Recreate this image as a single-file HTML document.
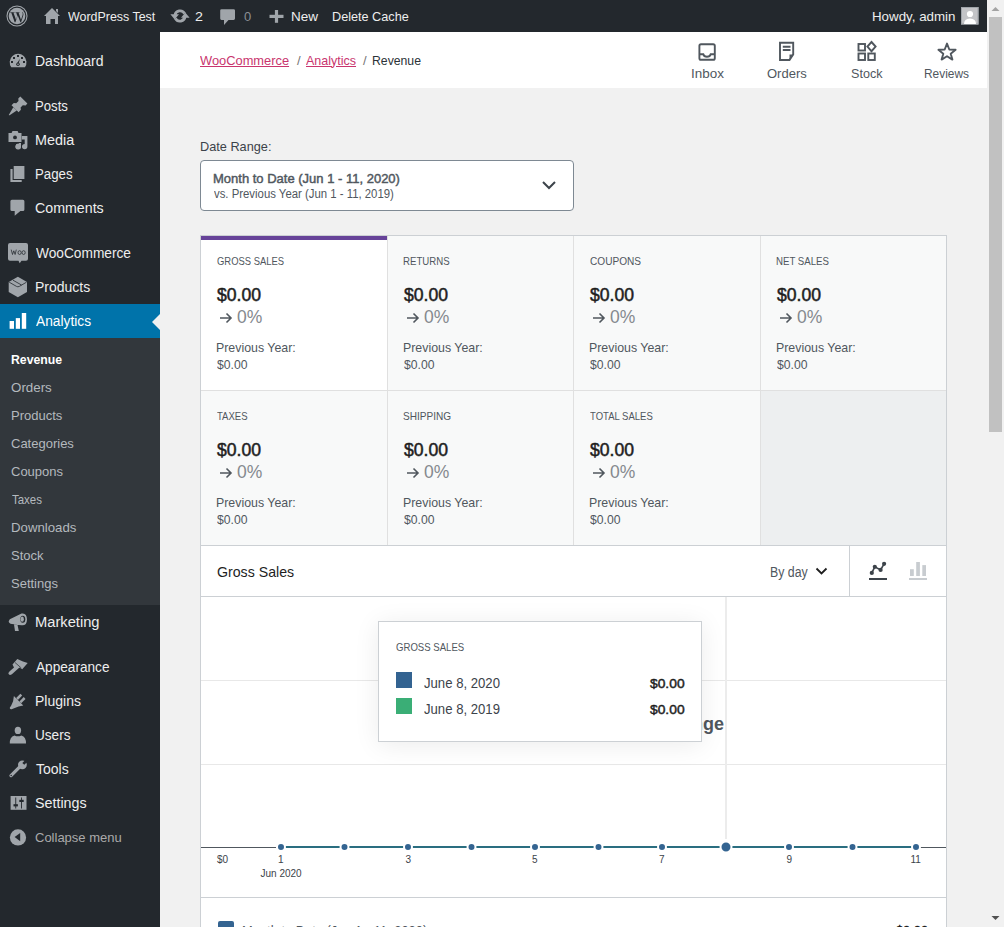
<!DOCTYPE html>
<html><head><meta charset="utf-8">
<style>
*{box-sizing:border-box;margin:0;padding:0}
html,body{width:1004px;height:927px;overflow:hidden;background:#f1f1f1;font-family:"Liberation Sans",sans-serif;position:relative}
.a{position:absolute}
.t{position:absolute;white-space:nowrap;font-family:"Liberation Sans",sans-serif}
svg{position:absolute;overflow:visible}
</style></head><body>
<!-- admin bar -->
<div class="a" style="left:0;top:0;width:987px;height:32px;background:#23282d"></div>
<!-- sidebar -->
<div class="a" style="left:0;top:32px;width:160px;height:895px;background:#23282d"></div>
<div class="a" style="left:0;top:338px;width:160px;height:267px;background:#32373c"></div>
<div class="a" style="left:0;top:304px;width:160px;height:34px;background:#0073aa"></div>
<svg style="left:152px;top:314px" width="8" height="16"><path d="M8 0 L0 8 L8 16Z" fill="#f1f1f1"/></svg>
<!-- header -->
<div class="a" style="left:160px;top:32px;width:827px;height:56px;background:#fff"></div>
<!-- scrollbar -->
<div class="a" style="left:987px;top:0;width:17px;height:927px;background:#f1f1f1"></div>
<div class="a" style="left:989px;top:17px;width:13px;height:415px;background:#c1c1c1"></div>
<svg style="left:987px;top:0" width="17" height="17"><path d="M4.5 11 L8.5 7 L12.5 11Z" fill="#a3a3a3"/></svg>
<svg style="left:987px;top:910px" width="17" height="17"><path d="M4.5 6 L8.5 10 L12.5 6Z" fill="#505050"/></svg>

<!-- date range box -->
<div class="a" style="left:200px;top:160px;width:374px;height:51px;background:#fff;border:1px solid #7e8993;border-radius:4px"></div>
<svg style="left:541px;top:180px" width="16" height="10"><path d="M2 2 L8 8 L14 2" fill="none" stroke="#3c434a" stroke-width="2"/></svg>

<!-- summary grid -->
<div class="a" style="left:200px;top:235px;width:747px;height:311px;background:#e0e0e0;border:1px solid #ccd0d4"></div>
<div class="a" style="left:201px;top:236px;width:186px;height:154px;background:#fff"></div>
<div class="a" style="left:201px;top:236px;width:186px;height:4px;background:#674399"></div>
<div class="a" style="left:388px;top:236px;width:185px;height:154px;background:#f8f9f9"></div>
<div class="a" style="left:574px;top:236px;width:186px;height:154px;background:#f8f9f9"></div>
<div class="a" style="left:761px;top:236px;width:185px;height:154px;background:#f8f9f9"></div>
<div class="a" style="left:201px;top:391px;width:186px;height:154px;background:#f8f9f9"></div>
<div class="a" style="left:388px;top:391px;width:185px;height:154px;background:#f8f9f9"></div>
<div class="a" style="left:574px;top:391px;width:186px;height:154px;background:#f8f9f9"></div>
<div class="a" style="left:761px;top:391px;width:185px;height:154px;background:#edeff0"></div>
<!-- arrows in summary -->
<svg style="left:0;top:0" width="1" height="1">
<defs><g id="arr"><path d="M0 5 H11 M6.5 0.5 L11 5 L6.5 9.5" fill="none" stroke="#50575e" stroke-width="1.6"/></g></defs>
<use href="#arr" x="220" y="313"/><use href="#arr" x="407" y="313"/><use href="#arr" x="593" y="313"/><use href="#arr" x="780" y="313"/>
<use href="#arr" x="220" y="468"/><use href="#arr" x="407" y="468"/><use href="#arr" x="593" y="468"/>
</svg>

<!-- chart panel -->
<div class="a" style="left:200px;top:545px;width:747px;height:400px;background:#fff;border:1px solid #ccd0d4"></div>
<div class="a" style="left:201px;top:596px;width:745px;height:1px;background:#ccd0d4"></div>
<div class="a" style="left:849px;top:546px;width:1px;height:50px;background:#ccd0d4"></div>
<div class="a" style="left:201px;top:897px;width:745px;height:1px;background:#ccd0d4"></div>
<div class="a" style="left:201px;top:680px;width:745px;height:1px;background:#e8e8e8"></div>
<div class="a" style="left:201px;top:764px;width:745px;height:1px;background:#e8e8e8"></div>
<div class="a" style="left:725px;top:597px;width:2px;height:242px;background:#ececec"></div>
<!-- by day chevron -->
<svg style="left:815px;top:567px" width="13" height="9"><path d="M1.5 1.5 L6.5 6.5 L11.5 1.5" fill="none" stroke="#1e1e1e" stroke-width="1.8"/></svg>
<!-- line chart icon -->
<svg style="left:0;top:0" width="1004" height="927">
<path d="M871.8 572.9 L874.8 566.8 L880.6 569.9 L884.1 563.8" fill="none" stroke="#3c434a" stroke-width="1.6"/>
<g fill="#3c434a"><circle cx="871.8" cy="572.9" r="2.1"/><circle cx="874.8" cy="566.8" r="2.1"/><circle cx="880.6" cy="569.9" r="2.1"/><circle cx="884.1" cy="563.8" r="2.1"/>
<rect x="869" y="578" width="18" height="2"/></g>
<g fill="#c8ccd0"><rect x="910" y="569.2" width="3.8" height="6.8"/><rect x="916.2" y="562" width="3.7" height="14"/><rect x="922.3" y="565.1" width="3.7" height="10.9"/><rect x="909" y="578" width="18" height="2"/></g>
</svg>
<!-- chart axis & line -->
<svg style="left:0;top:0" width="1004" height="927">
<line x1="201" y1="847.5" x2="276" y2="847.5" stroke="#50575e" stroke-width="1"/>
<line x1="916" y1="847.5" x2="946" y2="847.5" stroke="#50575e" stroke-width="1"/>
<line x1="281" y1="847" x2="916" y2="847" stroke="#2a6e80" stroke-width="2"/>
<g fill="#346491" stroke="#fff" stroke-width="2">
<circle cx="281" cy="847" r="4"/><circle cx="344.5" cy="847" r="4"/><circle cx="408" cy="847" r="4"/><circle cx="471.5" cy="847" r="4"/>
<circle cx="535" cy="847" r="4"/><circle cx="598.5" cy="847" r="4"/><circle cx="662" cy="847" r="4"/><circle cx="726" cy="847" r="5.5"/>
<circle cx="789" cy="847" r="4"/><circle cx="852.5" cy="847" r="4"/><circle cx="916" cy="847" r="4"/>
</g>
</svg>
<!-- legend bottom checkbox -->
<div class="a" style="left:218px;top:921px;width:16px;height:16px;background:#346491;border-radius:2px"></div>

<div class="t" style="left:68.00px;top:10.00px;font-size:13.000px;line-height:13.000px;font-weight:400;color:#eeeeee;transform-origin:0 0;transform:scaleX(0.9560);">WordPress Test</div><div class="t" style="left:194.90px;top:10.00px;font-size:13.000px;line-height:13.000px;font-weight:400;color:#eeeeee;transform-origin:0 0;transform:scaleX(1.1000);">2</div><div class="t" style="left:244.00px;top:10.00px;font-size:13.000px;line-height:13.000px;font-weight:400;color:#8c8f94;transform-origin:0 0;transform:scaleX(1.0000);">0</div><div class="t" style="left:290.96px;top:10.00px;font-size:13.000px;line-height:13.000px;font-weight:400;color:#eeeeee;transform-origin:0 0;transform:scaleX(1.0400);">New</div><div class="t" style="left:332.03px;top:10.00px;font-size:13.000px;line-height:13.000px;font-weight:400;color:#eeeeee;transform-origin:0 0;transform:scaleX(0.9740);">Delete Cache</div><div class="t" style="left:871.98px;top:10.00px;font-size:13.000px;line-height:13.000px;font-weight:400;color:#eeeeee;transform-origin:0 0;transform:scaleX(1.0250);">Howdy, admin</div><div class="t" style="left:35.00px;top:54.15px;font-size:14.000px;line-height:14.000px;font-weight:400;color:#eeeeee;transform-origin:0 0;transform:scaleX(1.0000);">Dashboard</div><div class="t" style="left:35.06px;top:99.15px;font-size:14.000px;line-height:14.000px;font-weight:400;color:#eeeeee;transform-origin:0 0;transform:scaleX(0.9412);">Posts</div><div class="t" style="left:34.97px;top:133.15px;font-size:14.000px;line-height:14.000px;font-weight:400;color:#eeeeee;transform-origin:0 0;transform:scaleX(1.0270);">Media</div><div class="t" style="left:35.05px;top:167.15px;font-size:14.000px;line-height:14.000px;font-weight:400;color:#eeeeee;transform-origin:0 0;transform:scaleX(0.9474);">Pages</div><div class="t" style="left:34.98px;top:201.15px;font-size:14.000px;line-height:14.000px;font-weight:400;color:#eeeeee;transform-origin:0 0;transform:scaleX(1.0152);">Comments</div><div class="t" style="left:36.00px;top:246.15px;font-size:14.000px;line-height:14.000px;font-weight:400;color:#eeeeee;transform-origin:0 0;transform:scaleX(0.9794);">WooCommerce</div><div class="t" style="left:35.00px;top:280.15px;font-size:14.000px;line-height:14.000px;font-weight:400;color:#eeeeee;transform-origin:0 0;transform:scaleX(1.0000);">Products</div><div class="t" style="left:36.00px;top:314.15px;font-size:14.000px;line-height:14.000px;font-weight:400;color:#ffffff;transform-origin:0 0;transform:scaleX(0.9821);">Analytics</div><div class="t" style="left:34.95px;top:615.15px;font-size:14.000px;line-height:14.000px;font-weight:400;color:#eeeeee;transform-origin:0 0;transform:scaleX(1.0500);">Marketing</div><div class="t" style="left:36.00px;top:660.15px;font-size:14.000px;line-height:14.000px;font-weight:400;color:#eeeeee;transform-origin:0 0;transform:scaleX(0.9733);">Appearance</div><div class="t" style="left:35.00px;top:694.15px;font-size:14.000px;line-height:14.000px;font-weight:400;color:#eeeeee;transform-origin:0 0;transform:scaleX(1.0000);">Plugins</div><div class="t" style="left:35.03px;top:728.15px;font-size:14.000px;line-height:14.000px;font-weight:400;color:#eeeeee;transform-origin:0 0;transform:scaleX(0.9714);">Users</div><div class="t" style="left:36.00px;top:762.15px;font-size:14.000px;line-height:14.000px;font-weight:400;color:#eeeeee;transform-origin:0 0;transform:scaleX(1.0000);">Tools</div><div class="t" style="left:34.98px;top:796.15px;font-size:14.000px;line-height:14.000px;font-weight:400;color:#eeeeee;transform-origin:0 0;transform:scaleX(1.0204);">Settings</div><div class="t" style="left:35.00px;top:831.00px;font-size:13.000px;line-height:13.000px;font-weight:400;color:#aaaaaa;transform-origin:0 0;transform:scaleX(1.0000);">Collapse menu</div><div class="t" style="left:11.06px;top:353.00px;font-size:13.000px;line-height:13.000px;font-weight:700;color:#ffffff;transform-origin:0 0;transform:scaleX(0.9434);">Revenue</div><div class="t" style="left:10.97px;top:381.00px;font-size:13.000px;line-height:13.000px;font-weight:400;color:#b4b9be;transform-origin:0 0;transform:scaleX(1.0263);">Orders</div><div class="t" style="left:11.00px;top:409.00px;font-size:13.000px;line-height:13.000px;font-weight:400;color:#b4b9be;transform-origin:0 0;transform:scaleX(1.0000);">Products</div><div class="t" style="left:11.00px;top:437.00px;font-size:13.000px;line-height:13.000px;font-weight:400;color:#b4b9be;transform-origin:0 0;transform:scaleX(1.0000);">Categories</div><div class="t" style="left:11.00px;top:465.00px;font-size:13.000px;line-height:13.000px;font-weight:400;color:#b4b9be;transform-origin:0 0;transform:scaleX(1.0000);">Coupons</div><div class="t" style="left:12.00px;top:493.00px;font-size:13.000px;line-height:13.000px;font-weight:400;color:#b4b9be;transform-origin:0 0;transform:scaleX(0.8824);">Taxes</div><div class="t" style="left:10.98px;top:521.00px;font-size:13.000px;line-height:13.000px;font-weight:400;color:#b4b9be;transform-origin:0 0;transform:scaleX(1.0159);">Downloads</div><div class="t" style="left:11.00px;top:549.00px;font-size:13.000px;line-height:13.000px;font-weight:400;color:#b4b9be;transform-origin:0 0;transform:scaleX(1.0000);">Stock</div><div class="t" style="left:11.00px;top:577.00px;font-size:13.000px;line-height:13.000px;font-weight:400;color:#b4b9be;transform-origin:0 0;transform:scaleX(1.0000);">Settings</div><div class="t" style="left:200.00px;top:53.50px;font-size:13.000px;line-height:13.000px;font-weight:400;color:#c9356e;transform-origin:0 0;transform:scaleX(0.9889);text-decoration:underline;">WooCommerce</div><div class="t" style="left:297.00px;top:53.50px;font-size:13.000px;line-height:13.000px;font-weight:400;color:#757575;transform-origin:0 0;transform:scaleX(1.0000);">/</div><div class="t" style="left:306.00px;top:53.50px;font-size:13.000px;line-height:13.000px;font-weight:400;color:#c9356e;transform-origin:0 0;transform:scaleX(0.9615);text-decoration:underline;">Analytics</div><div class="t" style="left:363.00px;top:53.50px;font-size:13.000px;line-height:13.000px;font-weight:400;color:#757575;transform-origin:0 0;transform:scaleX(1.0000);">/</div><div class="t" style="left:372.06px;top:53.50px;font-size:13.000px;line-height:13.000px;font-weight:400;color:#2c3338;transform-origin:0 0;transform:scaleX(0.9412);">Revenue</div><div class="t" style="left:690.97px;top:67.00px;font-size:13.000px;line-height:13.000px;font-weight:400;color:#50575e;transform-origin:0 0;transform:scaleX(1.0333);">Inbox</div><div class="t" style="left:767.00px;top:67.00px;font-size:13.000px;line-height:13.000px;font-weight:400;color:#50575e;transform-origin:0 0;transform:scaleX(1.0000);">Orders</div><div class="t" style="left:851.03px;top:67.00px;font-size:13.000px;line-height:13.000px;font-weight:400;color:#50575e;transform-origin:0 0;transform:scaleX(0.9677);">Stock</div><div class="t" style="left:924.08px;top:67.00px;font-size:13.000px;line-height:13.000px;font-weight:400;color:#50575e;transform-origin:0 0;transform:scaleX(0.9167);">Reviews</div><div class="t" style="left:199.52px;top:140.00px;font-size:13.000px;line-height:13.000px;font-weight:400;color:#3c434a;transform-origin:0 0;transform:scaleX(0.9789);">Date Range:</div><div class="t" style="left:213.00px;top:172.00px;font-size:13.000px;line-height:13.000px;font-weight:400;color:#50575e;transform-origin:0 0;transform:scaleX(1.0000);-webkit-text-stroke:0.45px #50575e;">Month to Date (Jun 1 - 11, 2020)</div><div class="t" style="left:214.00px;top:187.84px;font-size:12.000px;line-height:12.000px;font-weight:400;color:#50575e;transform-origin:0 0;transform:scaleX(0.9471);">vs. Previous Year (Jun 1 - 11, 2019)</div><div class="t" style="left:217.00px;top:256.11px;font-size:10.500px;line-height:10.500px;font-weight:400;color:#50575e;transform-origin:0 0;transform:scaleX(0.8986);">GROSS SALES</div><div class="t" style="left:217.00px;top:286.06px;font-size:18.000px;line-height:18.000px;font-weight:400;color:#1e1e1e;transform-origin:0 0;transform:scaleX(0.9778);-webkit-text-stroke:0.5px #1e1e1e;">$0.00</div><div class="t" style="left:237.00px;top:309.19px;font-size:17.500px;line-height:17.500px;font-weight:400;color:#85898e;transform-origin:0 0;transform:scaleX(1.0000);">0%</div><div class="t" style="left:216.05px;top:340.50px;font-size:13.000px;line-height:13.000px;font-weight:400;color:#50575e;transform-origin:0 0;transform:scaleX(0.9512);">Previous Year:</div><div class="t" style="left:217.00px;top:358.40px;font-size:13.000px;line-height:13.000px;font-weight:400;color:#50575e;transform-origin:0 0;transform:scaleX(0.9375);">$0.00</div><div class="t" style="left:403.08px;top:256.11px;font-size:10.500px;line-height:10.500px;font-weight:400;color:#50575e;transform-origin:0 0;transform:scaleX(0.9184);">RETURNS</div><div class="t" style="left:404.00px;top:286.06px;font-size:18.000px;line-height:18.000px;font-weight:400;color:#1e1e1e;transform-origin:0 0;transform:scaleX(0.9778);-webkit-text-stroke:0.5px #1e1e1e;">$0.00</div><div class="t" style="left:424.00px;top:309.19px;font-size:17.500px;line-height:17.500px;font-weight:400;color:#85898e;transform-origin:0 0;transform:scaleX(1.0000);">0%</div><div class="t" style="left:403.05px;top:340.50px;font-size:13.000px;line-height:13.000px;font-weight:400;color:#50575e;transform-origin:0 0;transform:scaleX(0.9512);">Previous Year:</div><div class="t" style="left:404.00px;top:358.40px;font-size:13.000px;line-height:13.000px;font-weight:400;color:#50575e;transform-origin:0 0;transform:scaleX(0.9375);">$0.00</div><div class="t" style="left:590.00px;top:256.11px;font-size:10.500px;line-height:10.500px;font-weight:400;color:#50575e;transform-origin:0 0;transform:scaleX(0.9623);">COUPONS</div><div class="t" style="left:590.00px;top:286.06px;font-size:18.000px;line-height:18.000px;font-weight:400;color:#1e1e1e;transform-origin:0 0;transform:scaleX(0.9778);-webkit-text-stroke:0.5px #1e1e1e;">$0.00</div><div class="t" style="left:610.00px;top:309.19px;font-size:17.500px;line-height:17.500px;font-weight:400;color:#85898e;transform-origin:0 0;transform:scaleX(1.0000);">0%</div><div class="t" style="left:589.05px;top:340.50px;font-size:13.000px;line-height:13.000px;font-weight:400;color:#50575e;transform-origin:0 0;transform:scaleX(0.9512);">Previous Year:</div><div class="t" style="left:590.00px;top:358.40px;font-size:13.000px;line-height:13.000px;font-weight:400;color:#50575e;transform-origin:0 0;transform:scaleX(0.9375);">$0.00</div><div class="t" style="left:776.08px;top:256.11px;font-size:10.500px;line-height:10.500px;font-weight:400;color:#50575e;transform-origin:0 0;transform:scaleX(0.9196);">NET SALES</div><div class="t" style="left:777.00px;top:286.06px;font-size:18.000px;line-height:18.000px;font-weight:400;color:#1e1e1e;transform-origin:0 0;transform:scaleX(0.9778);-webkit-text-stroke:0.5px #1e1e1e;">$0.00</div><div class="t" style="left:797.00px;top:309.19px;font-size:17.500px;line-height:17.500px;font-weight:400;color:#85898e;transform-origin:0 0;transform:scaleX(1.0000);">0%</div><div class="t" style="left:776.05px;top:340.50px;font-size:13.000px;line-height:13.000px;font-weight:400;color:#50575e;transform-origin:0 0;transform:scaleX(0.9512);">Previous Year:</div><div class="t" style="left:777.00px;top:358.40px;font-size:13.000px;line-height:13.000px;font-weight:400;color:#50575e;transform-origin:0 0;transform:scaleX(0.9375);">$0.00</div><div class="t" style="left:217.00px;top:411.11px;font-size:10.500px;line-height:10.500px;font-weight:400;color:#50575e;transform-origin:0 0;transform:scaleX(0.9091);">TAXES</div><div class="t" style="left:217.00px;top:441.06px;font-size:18.000px;line-height:18.000px;font-weight:400;color:#1e1e1e;transform-origin:0 0;transform:scaleX(0.9778);-webkit-text-stroke:0.5px #1e1e1e;">$0.00</div><div class="t" style="left:237.00px;top:464.19px;font-size:17.500px;line-height:17.500px;font-weight:400;color:#85898e;transform-origin:0 0;transform:scaleX(1.0000);">0%</div><div class="t" style="left:216.05px;top:495.50px;font-size:13.000px;line-height:13.000px;font-weight:400;color:#50575e;transform-origin:0 0;transform:scaleX(0.9512);">Previous Year:</div><div class="t" style="left:217.00px;top:513.40px;font-size:13.000px;line-height:13.000px;font-weight:400;color:#50575e;transform-origin:0 0;transform:scaleX(0.9375);">$0.00</div><div class="t" style="left:403.04px;top:411.11px;font-size:10.500px;line-height:10.500px;font-weight:400;color:#50575e;transform-origin:0 0;transform:scaleX(0.9592);">SHIPPING</div><div class="t" style="left:404.00px;top:441.06px;font-size:18.000px;line-height:18.000px;font-weight:400;color:#1e1e1e;transform-origin:0 0;transform:scaleX(0.9778);-webkit-text-stroke:0.5px #1e1e1e;">$0.00</div><div class="t" style="left:424.00px;top:464.19px;font-size:17.500px;line-height:17.500px;font-weight:400;color:#85898e;transform-origin:0 0;transform:scaleX(1.0000);">0%</div><div class="t" style="left:403.05px;top:495.50px;font-size:13.000px;line-height:13.000px;font-weight:400;color:#50575e;transform-origin:0 0;transform:scaleX(0.9512);">Previous Year:</div><div class="t" style="left:404.00px;top:513.40px;font-size:13.000px;line-height:13.000px;font-weight:400;color:#50575e;transform-origin:0 0;transform:scaleX(0.9375);">$0.00</div><div class="t" style="left:590.00px;top:411.11px;font-size:10.500px;line-height:10.500px;font-weight:400;color:#50575e;transform-origin:0 0;transform:scaleX(0.9058);">TOTAL SALES</div><div class="t" style="left:590.00px;top:441.06px;font-size:18.000px;line-height:18.000px;font-weight:400;color:#1e1e1e;transform-origin:0 0;transform:scaleX(0.9778);-webkit-text-stroke:0.5px #1e1e1e;">$0.00</div><div class="t" style="left:610.00px;top:464.19px;font-size:17.500px;line-height:17.500px;font-weight:400;color:#85898e;transform-origin:0 0;transform:scaleX(1.0000);">0%</div><div class="t" style="left:589.05px;top:495.50px;font-size:13.000px;line-height:13.000px;font-weight:400;color:#50575e;transform-origin:0 0;transform:scaleX(0.9512);">Previous Year:</div><div class="t" style="left:590.00px;top:513.40px;font-size:13.000px;line-height:13.000px;font-weight:400;color:#50575e;transform-origin:0 0;transform:scaleX(0.9375);">$0.00</div><div class="t" style="left:216.56px;top:563.80px;font-size:15.000px;line-height:15.000px;font-weight:400;color:#1e1e1e;transform-origin:0 0;transform:scaleX(0.9437);">Gross Sales</div><div class="t" style="left:769.62px;top:565.15px;font-size:14.000px;line-height:14.000px;font-weight:400;color:#50575e;transform-origin:0 0;transform:scaleX(0.8810);">By day</div><div class="t" style="left:424.00px;top:714.76px;font-size:18.000px;line-height:18.000px;font-weight:700;color:#50575e;transform-origin:0 0;transform:scaleX(1.0000);">No data for the selected date range</div><div class="t" style="left:278.00px;top:854.53px;font-size:10.000px;line-height:10.000px;font-weight:400;color:#3c434a;transform-origin:0 0;transform:scaleX(1.0000);">1</div><div class="t" style="left:405.50px;top:854.53px;font-size:10.000px;line-height:10.000px;font-weight:400;color:#3c434a;transform-origin:0 0;transform:scaleX(1.0000);">3</div><div class="t" style="left:532.00px;top:854.53px;font-size:10.000px;line-height:10.000px;font-weight:400;color:#3c434a;transform-origin:0 0;transform:scaleX(1.0000);">5</div><div class="t" style="left:659.00px;top:854.53px;font-size:10.000px;line-height:10.000px;font-weight:400;color:#3c434a;transform-origin:0 0;transform:scaleX(1.0000);">7</div><div class="t" style="left:786.50px;top:854.53px;font-size:10.000px;line-height:10.000px;font-weight:400;color:#3c434a;transform-origin:0 0;transform:scaleX(1.0000);">9</div><div class="t" style="left:910.50px;top:854.53px;font-size:10.000px;line-height:10.000px;font-weight:400;color:#3c434a;transform-origin:0 0;transform:scaleX(1.0000);">11</div><div class="t" style="left:217.00px;top:854.53px;font-size:10.000px;line-height:10.000px;font-weight:400;color:#3c434a;transform-origin:0 0;transform:scaleX(1.0000);">$0</div><div class="t" style="left:260.50px;top:868.53px;font-size:10.000px;line-height:10.000px;font-weight:400;color:#3c434a;transform-origin:0 0;transform:scaleX(1.0000);">Jun 2020</div><div class="t" style="left:242.08px;top:923.65px;font-size:14.000px;line-height:14.000px;font-weight:400;color:#50575e;transform-origin:0 0;transform:scaleX(0.9200);">Month to Date (Jun 1 - 11, 2020)</div><div class="t" style="left:896.00px;top:923.65px;font-size:14.000px;line-height:14.000px;font-weight:400;color:#1e1e1e;transform-origin:0 0;transform:scaleX(0.9143);-webkit-text-stroke:0.45px #1e1e1e;">$0.00</div>

<!-- tooltip -->
<div class="a" style="left:378px;top:621px;width:324px;height:121px;background:#fff;border:1px solid #ccd0d4;box-shadow:0 3px 24px rgba(0,0,0,.08)"></div>
<div class="a" style="left:396px;top:672px;width:16px;height:16px;background:#336391"></div>
<div class="a" style="left:396px;top:698px;width:16px;height:16px;background:#3aae76"></div>
<div class="t" style="left:396.00px;top:641.69px;font-size:11.000px;line-height:11.000px;font-weight:400;color:#50575e;transform-origin:0 0;transform:scaleX(0.8718);">GROSS SALES</div><div class="t" style="left:424.00px;top:676.15px;font-size:14.000px;line-height:14.000px;font-weight:400;color:#3c434a;transform-origin:0 0;transform:scaleX(0.9383);">June 8, 2020</div><div class="t" style="left:424.00px;top:701.65px;font-size:14.000px;line-height:14.000px;font-weight:400;color:#3c434a;transform-origin:0 0;transform:scaleX(0.9383);">June 8, 2019</div><div class="t" style="left:650.00px;top:676.50px;font-size:13.000px;line-height:13.000px;font-weight:400;color:#1e1e1e;transform-origin:0 0;transform:scaleX(1.0625);-webkit-text-stroke:0.45px #1e1e1e;">$0.00</div><div class="t" style="left:650.00px;top:702.50px;font-size:13.000px;line-height:13.000px;font-weight:400;color:#1e1e1e;transform-origin:0 0;transform:scaleX(1.0625);-webkit-text-stroke:0.45px #1e1e1e;">$0.00</div>

<!-- ICONS -->
<svg style="left:0;top:0" width="1004" height="927">
<g fill="#a0a5aa">
<!-- WP logo -->
<circle cx="17" cy="16" r="10" fill="none" stroke="#a0a5aa" stroke-width="1.1"/>
<circle cx="17" cy="16" r="8.3"/>
<path d="M10.2 12.2 H14.6 V12.8 H13.5 L16 19.8 L17.3 16 L16.3 12.8 H15.5 V12.2 H19.6 V12.8 H18.6 L21 19.8 L22.6 15 C23 13.5 22.6 12.8 22 12.8 V12.2 C23 12.5 23.6 13.3 23.4 15 L21.1 22.3 H20.4 L17.8 15.5 L15.4 22.3 H14.7 L11.3 12.8 H10.2Z" fill="#23282d"/>
<!-- home -->
<path d="M52 8 L60 16 L58 16 L58 24 L55 24 L55 19 L50.5 19 L50.5 24 L46 24 L46 16 L44 16 Z M56 9 H58 V13 L56 11Z"/>
<rect x="51.5" y="19" width="2.5" height="5" fill="#23282d"/>
<!-- updates -->
<path d="M175 15.5 A5.1 5.1 0 0 1 184.6 13.6" fill="none" stroke="#a0a5aa" stroke-width="2.8"/>
<path d="M185 16.5 A5.1 5.1 0 0 1 175.4 18.4" fill="none" stroke="#a0a5aa" stroke-width="2.8"/>
<path d="M170.4 14.2 L179 14.2 L174.7 19.6 Z"/>
<path d="M181 17.8 L189.6 17.8 L185.3 12.4 Z"/>
<!-- comments bubble -->
<path d="M221.5 9.2 H233.6 Q235 9.2 235 10.6 V18.6 Q235 20 233.6 20 H228.5 L224 25 V20 H221.5 Q220.2 20 220.2 18.6 V10.6 Q220.2 9.2 221.5 9.2Z"/>
<!-- plus -->
<rect x="269.5" y="14.8" width="14" height="3.2"/><rect x="274.9" y="10" width="3.2" height="12.8"/>

<!-- dashboard -->
<path d="M11.3 67.2 A8.4 8.4 0 1 1 24.9 67.2 Z"/>
<g fill="#23282d"><rect x="11" y="61" width="2" height="2"/><rect x="13" y="57" width="2" height="2"/><rect x="17" y="55" width="2" height="2"/><rect x="21" y="57" width="2" height="2"/><rect x="23" y="61" width="2" height="2"/>
<path d="M20 58.8 L18.8 63 L17.2 63 Z"/><circle cx="18" cy="64.2" r="1.8"/></g>
<circle cx="18" cy="64.2" r="0.8"/>
<!-- pushpin -->
<path d="M20.3 96.5 L27.4 103.6 L25.6 105.4 L22.8 105.3 L20.6 107.6 L20.9 109.8 L18.6 112.2 L15.3 108.9 L11.5 105.2 L13.8 102.9 L16.2 103.2 L18.5 101 L18.3 98.5 Z"/>
<path d="M13.3 107.3 L16.8 110.6 L9.6 115.2 Q8.7 115.6 8.9 114.7 Z"/>
<!-- media -->
<path d="M8.5 133 H11.6 L12.5 131 H17.6 L18.5 133 H21.5 V142 H8.5 Z"/>
<circle cx="15" cy="137.4" r="1.9" fill="#23282d"/>
<path d="M21.8 136 H27.4 V146.6 A2.7 2.7 0 1 1 24.7 143.9 V139.4 H21.8 Z"/>
<path d="M18.8 143 H21 V146.6 A2.8 2.8 0 1 1 18.8 143.9Z"/>
<circle cx="18.2" cy="146.4" r="2.6"/>
<!-- pages -->
<rect x="13.7" y="166" width="10.7" height="13"/>
<path d="M10.4 169 H12.6 V180 H21.7 V182 H10.4 Z"/>
<!-- comments -->
<path d="M11.9 199.8 H22.9 Q24.4 199.8 24.4 201.3 V209.6 Q24.4 211.1 22.9 211.1 H20.4 L14.7 215.8 V211.1 H11.9 Q10.4 211.1 10.4 209.6 V201.3 Q10.4 199.8 11.9 199.8Z"/>
<!-- woo -->
<path d="M10 243 H26 Q28 243 28 245 V258.7 Q28 260.7 26 260.7 H21.5 L19.7 263.3 L18.5 260.7 H10 Q8 260.7 8 258.7 V245 Q8 243 10 243Z"/>
<path d="M11.2 249.6 L12.5 254.5 L13.8 250.8 L15.1 254.5 L16.3 249.6" fill="none" stroke="#23282d" stroke-width="0.75"/>
<ellipse cx="19.6" cy="252.6" rx="1.6" ry="1.9" fill="none" stroke="#23282d" stroke-width="0.75"/>
<ellipse cx="23.6" cy="252.6" rx="1.6" ry="1.9" fill="none" stroke="#23282d" stroke-width="0.75"/>
<!-- products cube -->
<path d="M17.9 276.8 L27 282 V292 L17.9 297.2 L8.7 292 V282 Z"/>
<path d="M9.2 282.2 L16.5 286.4 Q17.9 287.2 19.3 286.4 L26.5 282.2 M13 280.2 L21.5 285" fill="none" stroke="#23282d" stroke-width="0.8"/>
</g>
<!-- analytics bars -->
<g fill="#fff">
<rect x="9.6" y="321" width="4.4" height="7.8"/><rect x="15.8" y="318.1" width="4.2" height="10.7"/><rect x="21.8" y="313" width="4.4" height="15.8"/>
</g>
<g fill="#a0a5aa">
<!-- megaphone -->
<path d="M9.8 619.2 L21.5 613.6 Q26.8 612.5 27 619.5 Q26.8 626 21.5 625.3 L14 624.5 L15 631 H18.8 L17.5 624.8 L12 624 Q8.7 623.5 8.7 621.2 Z"/>
<ellipse cx="22.8" cy="619.2" rx="2.5" ry="3.5" fill="#23282d"/>
<ellipse cx="22.2" cy="619.2" rx="1.7" ry="2.6"/>
<!-- brush -->
<path d="M17.3 659 L23 661.5 L27.7 663 L22.2 669.3 L19.5 667.5 L16.6 670 L12.2 674 Q9.5 676 8.4 673.8 Q8.3 672.5 9.7 671.3 L14 667.5 L12.5 664.5 Z"/>
<path d="M15 662.5 L21.3 668" stroke="#23282d" stroke-width="0.7"/>
<!-- plugins -->
<path d="M13.9 696 L23.3 705.4 L18.6 706.6 L12.2 708.9 Q10.3 709.6 9.8 708.3 Q9.5 707.3 11 705.9 L13.1 701.2 Z"/>
<line x1="17" y1="699" x2="21.3" y2="694.7" stroke="#a0a5aa" stroke-width="2.5"/>
<line x1="20.3" y1="702.3" x2="24.6" y2="698" stroke="#a0a5aa" stroke-width="2.5"/>
<!-- users -->
<ellipse cx="17.9" cy="730.4" rx="3.2" ry="3.6"/>
<path d="M9.8 743.6 Q9.5 737 14.5 735.4 Q17.9 737.2 21.3 735.4 Q26.3 737 26 743.6 Z"/>
<!-- tools -->
<line x1="11" y1="775.6" x2="20" y2="766.6" stroke="#a0a5aa" stroke-width="3.3" stroke-linecap="round"/>
<circle cx="22.4" cy="764.8" r="4.4"/>
<rect x="21" y="757.5" width="2.8" height="6" fill="#23282d" transform="rotate(45 22.4 764.8)"/>
<circle cx="11.2" cy="775.4" r="0.75" fill="#23282d"/>
<!-- settings -->
<rect x="10.6" y="796" width="15.9" height="13.8"/>
<g fill="#23282d"><rect x="15.3" y="797.5" width="0.9" height="11"/><rect x="21.1" y="797.5" width="0.9" height="11"/><rect x="13.5" y="804.2" width="4.4" height="2.2"/><rect x="19.3" y="799.8" width="4.4" height="2.2"/></g>
<!-- collapse -->
<circle cx="18" cy="837.4" r="8.1"/>
<path d="M20.2 833 V841.2 L14.6 837.1 Z" fill="#23282d"/>
</g>
<!-- avatar -->
<rect x="961" y="7" width="17.5" height="17.5" fill="#c3c4c7"/>
<rect x="961.5" y="7.5" width="16.5" height="16.5" fill="none" stroke="#a0a5aa" stroke-width="1"/>
<circle cx="970" cy="14" r="3.1" fill="#fff"/>
<path d="M964 24 Q964 18.8 970 18.5 Q976 18.8 976 24 Z" fill="#fff"/>

<!-- header icons -->
<g fill="none" stroke="#50575e" stroke-width="1.9">
<rect x="699.4" y="44.2" width="15.4" height="15.6" rx="1.6"/>
<path d="M699.5 54.3 H703.3 Q704 56.8 707 56.8 Q710 56.8 710.7 54.3 H714.6"/>
<path d="M780 42.8 H793.2 V54.5 L789.5 60 H780 Z"/>
<path d="M782.8 46.8 H790.5 M782.8 50 H790.5"/>
<rect x="858.5" y="44" width="6.5" height="6.5"/><rect x="858.5" y="53.5" width="6.5" height="6.5"/><rect x="868.3" y="53.5" width="6.5" height="6.5"/>
<path d="M871.5 42 L875.6 46.6 L871.5 51.2 L867.4 46.6 Z"/>
<path d="M947 43.6 L949.3 49.5 L955.6 49.8 L950.7 53.7 L952.4 59.6 L947 56.2 L941.6 59.6 L943.3 53.7 L938.4 49.8 L944.7 49.5 Z" stroke-linejoin="round"/>
</g>
<path d="M793.2 54.5 L789.5 60 V54.5 Z" fill="#50575e"/>
</svg>

</body></html>
